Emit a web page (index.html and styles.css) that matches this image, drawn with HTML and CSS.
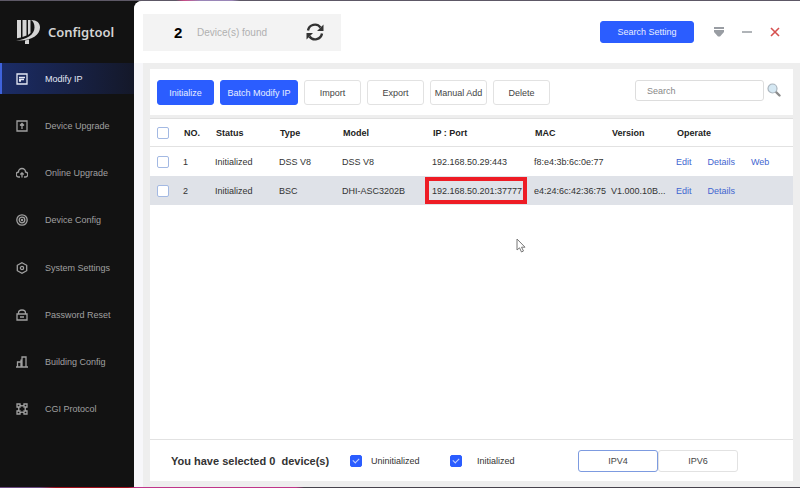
FILE: index.html
```html
<!DOCTYPE html>
<html lang="en">
<head>
    <meta charset="UTF-8">
    <meta name="viewport" content="width=device-width, initial-scale=1.0">
    <title>Configtool</title>
    <link rel="stylesheet" href="styles.css">
</head>
<body>
    <aside class="sidebar">
        <div class="brand">
            <svg class="logo" viewBox="0 0 24 24" fill="#d4d4d4">
                <path d="M1 0h4v17.500l-4 .8zM6.500 0h4v15.500l-4 1.600zM9 20.500l4-1V24H9z"/>
                <path d="M12 0h2.500v13l-2.500 2z"/>
                <path d="M15 0c6 0 9 3 9 7.500C24 15 15 21.500 0 20.500c11-1 18.500-6 18.500-13C18.500 4 17.500 1.500 15 0z"/>
            </svg>
            <span class="brand-name">Configtool</span>
        </div>
        <nav class="menu">
            <a href="#" class="menu-item active">
                <svg class="menu-icon" viewBox="0 0 12 12"><path d="M1 1h10v10H1z"/><path d="M3 4.500h6M3 6.500h5M3 8h2"/></svg>
                Modify IP
            </a>
            <a href="#" class="menu-item">
                <svg class="menu-icon" viewBox="0 0 12 12"><path d="M1 1h10v10H1zM6 9V4M4 5.500L6 3.500l2 2"/></svg>
                Device Upgrade
            </a>
            <a href="#" class="menu-item">
                <svg class="menu-icon" viewBox="0 0 12 12"><path d="M4 10H3A2.500 2.500 0 0 1 2.500 5a3.500 3.500 0 0 1 7 0A2.500 2.500 0 0 1 9 10H8M6 10.500V6M4.300 7.500L6 5.800l1.700 1.700"/></svg>
                Online Upgrade
            </a>
            <a href="#" class="menu-item">
                <svg class="menu-icon" viewBox="0 0 12 12"><circle cx="6" cy="6" r="5.200"/><circle cx="6" cy="6" r="2.800"/><circle cx="6" cy="6" r=".6"/></svg>
                Device Config
            </a>
            <a href="#" class="menu-item">
                <svg class="menu-icon" viewBox="0 0 12 12"><path d="M6 .7l4.700 2.600v5.400L6 11.300 1.300 8.700V3.300z"/><circle cx="6" cy="6" r="1.600"/></svg>
                System Settings
            </a>
            <a href="#" class="menu-item">
                <svg class="menu-icon" viewBox="0 0 12 12"><path d="M1 5h10v6H1zM2.500 5V4a3.500 3 0 0 1 7 0v1M4 8h4"/></svg>
                Password Reset
            </a>
            <a href="#" class="menu-item">
                <svg class="menu-icon" viewBox="0 0 12 12"><path d="M0 11h12M1.500 11V6H5M5 11V3.500M6 11V1h4v10"/></svg>
                Building Config
            </a>
            <a href="#" class="menu-item">
                <svg class="menu-icon" viewBox="0 0 12 12"><path d="M1 1h3v3H1zM8 1h3v3H8zM1 8h3v3H1zM8 8h3v3H8zM4 2l2 1 2-1M4 10l2-1 2 1M2 4l1 2-1 2M10 4L9 6l1 2"/></svg>
                CGI Protocol
            </a>
        </nav>
    </aside>

    <main class="main">
        <header class="header">
            <div class="found">
                <strong class="found-count">2</strong>
                <span class="found-label">Device(s) found</span>
                <button class="icon-btn refresh" aria-label="Refresh">
                    <svg width="18" height="18" viewBox="0 0 18 18" fill="none" stroke="#333" stroke-width="2.400">
                        <path d="M2 7.500A7 7 0 0 1 14.500 4.500M16 10.500A7 7 0 0 1 3.500 13.500"/>
                        <path d="M17.500 1.500V8H11zM.5 16.500V10H7z" fill="#333" stroke="none"/>
                    </svg>
                </button>
            </div>
            <button class="btn btn-primary search-setting">Search Setting</button>
            <div class="window-controls">
                <button class="icon-btn" aria-label="Menu">
                    <svg width="10" height="10" viewBox="0 0 10 10" fill="#999da3"><path d="M0 0h10v2H0zM0 3h10v2L6 9.500H4L0 5z"/></svg>
                </button>
                <button class="icon-btn" aria-label="Minimize">
                    <svg width="10" height="10" viewBox="0 0 10 10" fill="#b0b4b8"><path d="M0 4h10v2H0z"/></svg>
                </button>
                <button class="icon-btn" aria-label="Close">
                    <svg width="10" height="10" viewBox="0 0 10 10" stroke="#d6504f" stroke-width="1.600"><path d="M1 1l8 8M9 1L1 9"/></svg>
                </button>
            </div>
        </header>

        <section class="content">
            <div class="toolbar">
                <button class="btn btn-primary">Initialize</button>
                <button class="btn btn-primary btn-wide">Batch Modify IP</button>
                <button class="btn">Import</button>
                <button class="btn">Export</button>
                <button class="btn">Manual Add</button>
                <button class="btn">Delete</button>
                <div class="search">
                    <input type="text" class="search-input" placeholder="Search" aria-label="Search">
                    <button class="icon-btn" aria-label="Find">
                        <svg width="14" height="14" viewBox="0 0 14 14">
                            <path d="M8.500 8.500l4 4" stroke="#8b8b8b" stroke-width="2.400" stroke-linecap="round"/>
                            <circle cx="5.500" cy="5.500" r="4.500" fill="#d5e8f3" stroke="#aab4bd" stroke-width="1.200"/>
                        </svg>
                    </button>
                </div>
            </div>

            <div class="devices">
                <table class="device-table">
                    <colgroup>
                        <col class="col-check">
                        <col class="col-no">
                        <col class="col-status">
                        <col class="col-type">
                        <col class="col-model">
                        <col class="col-ip">
                        <col class="col-mac">
                        <col class="col-version">
                        <col>
                    </colgroup>
                    <thead>
                        <tr>
                            <th class="check"><input type="checkbox" aria-label="Select all devices"></th>
                            <th>NO.</th>
                            <th>Status</th>
                            <th>Type</th>
                            <th>Model</th>
                            <th>IP : Port</th>
                            <th>MAC</th>
                            <th>Version</th>
                            <th>Operate</th>
                        </tr>
                    </thead>
                    <tbody>
                        <tr>
                            <td class="check"><input type="checkbox" aria-label="Select device 1"></td>
                            <td>1</td>
                            <td>Initialized</td>
                            <td>DSS V8</td>
                            <td>DSS V8</td>
                            <td>192.168.50.29:443</td>
                            <td>f8:e4:3b:6c:0e:77</td>
                            <td></td>
                            <td><div class="links"><a href="#">Edit</a><a href="#">Details</a><a href="#">Web</a></div></td>
                        </tr>
                        <tr class="current">
                            <td class="check"><input type="checkbox" aria-label="Select device 2"></td>
                            <td>2</td>
                            <td>Initialized</td>
                            <td>BSC</td>
                            <td>DHI-ASC3202B</td>
                            <td class="marked">192.168.50.201:37777</td>
                            <td>e4:24:6c:42:36:75</td>
                            <td>V1.000.10B...</td>
                            <td><div class="links"><a href="#">Edit</a><a href="#">Details</a></div></td>
                        </tr>
                    </tbody>
                </table>
            </div>

            <footer class="footer">
                <strong class="selected">You have selected 0&nbsp; device(s)</strong>
                <label class="filter"><input type="checkbox" checked>Uninitialized</label>
                <label class="filter"><input type="checkbox" checked>Initialized</label>
                <div class="ip-switch">
                    <button class="btn selected-ip">IPV4</button>
                    <button class="btn">IPV6</button>
                </div>
            </footer>
        </section>
    </main>

    <svg class="cursor" width="10" height="15" viewBox="0 0 10 15" fill="#fff" stroke="#777" stroke-width="1"><path d="M1 1v11l2.500-2.200L5.500 14l2-1-2-3.800H9z"/></svg>
</body>
</html>
```

FILE: styles.css
```css
*, *::before, *::after {
    box-sizing: border-box;
}
body {
    display: flex;
    min-height: 100vh;
    margin: 0;
    padding: 1px 0;
    font-family: "Liberation Sans", Arial, sans-serif;
    font-size: 9px;
    color: #333;
    background:
        linear-gradient(90deg, #5d5866 22%, #c94a86 23%, #9a86b8 25%, #9a86b8 29%, #5d5866 30%) top / 100% 1px no-repeat,
        linear-gradient(90deg, #6a4a80 5%, #a0101c 7%, #a0101c 16%, #c0358a 17%, #c0358a 37%, #47434c 38%) bottom / 100% 1px no-repeat,
        #121212;
}
button, input {
    font: inherit;
}

/* sidebar */
.sidebar {
    display: flex;
    flex-direction: column;
    flex: 0 0 134px;
    color: #a0a0a0;
    background: #121212;
}
.brand {
    display: flex;
    align-items: center;
    gap: 8px;
    height: 62px;
    padding-left: 16px;
}
.logo {
    width: 24px;
    height: 24px;
}
.brand-name {
    font-family: "Noto Sans", sans-serif;
    font-size: 13px;
    font-weight: 600;
    color: #d4d4d4;
}
.menu {
    display: flex;
    flex: 1;
    flex-direction: column;
    justify-content: space-between;
    padding-bottom: 62px;
}
.menu-item {
    display: flex;
    align-items: center;
    gap: 17px;
    height: 31px;
    padding-left: 16px;
    color: inherit;
    text-decoration: none;
}
.menu-item.active {
    padding-left: 14px;
    color: #e4e8f5;
    border-left: 2px solid #3f63dc;
    background: linear-gradient(90deg, #1b2c66, #141829);
}
.menu-icon {
    width: 12px;
    height: 12px;
    fill: none;
    stroke: currentColor;
    stroke-width: 1.3;
}

/* main area */
.main {
    display: flex;
    flex: 1;
    flex-direction: column;
    min-width: 0;
    padding-left: 9px;
    background: #f7f7fa;
    border-top-left-radius: 8px;
    overflow: hidden;
}
.header {
    display: flex;
    align-items: center;
    height: 62px;
    margin-left: -9px;
    padding: 0 20px 0 9px;
    background: #fff;
}
.found {
    display: flex;
    align-items: center;
    width: 198px;
    height: 37px;
    padding: 0 17px 0 31px;
    background: #f3f3f3;
}
.found-count {
    width: 23px;
    font-size: 15px;
    color: #000;
}
.found-label {
    font-size: 10px;
    color: #b0b0b0;
}
.icon-btn {
    display: flex;
    padding: 0;
    border: none;
    background: none;
    cursor: pointer;
}
.refresh {
    margin-left: auto;
}
.btn {
    min-width: 57px;
    height: 25px;
    padding: 0;
    color: #444;
    background: #fff;
    border: 1px solid #e2e2e2;
    border-radius: 3px;
    cursor: pointer;
}
.btn-primary {
    color: #e8eeff;
    background: #2b5dff;
    border-color: #2b5dff;
}
.btn-wide {
    width: 78px;
}
.search-setting {
    width: 94px;
    height: 22px;
    margin-left: auto;
}
.window-controls {
    display: flex;
    gap: 18px;
    margin-left: 20px;
}

/* content */
.content {
    display: flex;
    flex: 1;
    flex-direction: column;
    padding: 6px 7px;
    background: #eee;
}
.toolbar {
    display: flex;
    gap: 6px;
    padding: 11px 12px 10px 7px;
    background: #fff;
}
.search {
    display: flex;
    gap: 3px;
    margin-left: auto;
}
.search-input {
    width: 129px;
    height: 21px;
    padding: 0 11px;
    border: 1px solid #ddd;
    border-radius: 3px;
}
.search-input::placeholder {
    color: #888;
}
.search .icon-btn {
    height: 18px;
    padding-top: 3px;
}

/* device table */
.devices {
    flex: 1;
    margin-top: 3px;
    background: #fff;
    border-top: 1px solid #e0e0e0;
}
.device-table {
    width: 100%;
    table-layout: fixed;
    border-spacing: 0;
}
.col-check {
    width: 33px;
}
.col-no {
    width: 32px;
}
.col-status {
    width: 64px;
}
.col-type {
    width: 63px;
}
.col-model {
    width: 90px;
}
.col-ip {
    width: 102px;
}
.col-mac {
    width: 77px;
}
.col-version {
    width: 65px;
}
th, td {
    height: 29px;
    padding: 0;
    text-align: left;
    white-space: nowrap;
}
th {
    height: 28px;
    padding-left: 1px;
    color: #222;
    border-bottom: 1px solid #e2e2e2;
}
th.check, td.check {
    padding-left: 7px;
}
.current td {
    background: #dfe2e8;
}
.marked {
    position: relative;
}
.marked::after {
    content: "";
    position: absolute;
    top: 1px;
    bottom: 1px;
    left: -7px;
    width: 102px;
    border: 4px solid #ee1c25;
}
.links {
    display: flex;
    gap: 16px;
}
.links a {
    color: #3f66d0;
    text-decoration: none;
}
input[type="checkbox"] {
    display: block;
    width: 12px;
    height: 12px;
    margin: 0;
    appearance: none;
    background: #fff;
    border: 1px solid #a3b9e3;
    border-radius: 2px;
}
input[type="checkbox"]:checked {
    background: #2b5dff;
    border-color: #2b5dff;
}
input[type="checkbox"]:checked::before {
    content: "";
    display: block;
    width: 6px;
    height: 4px;
    margin: 2px;
    border: solid #c5d3ff;
    border-width: 0 0 1px 1px;
    transform: rotate(-45deg);
}

/* footer */
.footer {
    display: flex;
    align-items: center;
    height: 42px;
    padding: 0 55px 0 21px;
    background: #fff;
    border-top: 1px solid #e2e2e2;
}
.selected {
    width: 179px;
    font-size: 11px;
}
.filter {
    display: flex;
    align-items: center;
    gap: 9px;
    width: 100px;
}
.filter + .filter {
    gap: 15px;
}
.ip-switch {
    display: flex;
    margin-left: auto;
}
.ip-switch .btn {
    width: 80px;
    height: 22px;
}
.ip-switch .selected-ip {
    border-color: #7d9be0;
}

.cursor {
    position: absolute;
    top: 238px;
    left: 516px;
}
```
